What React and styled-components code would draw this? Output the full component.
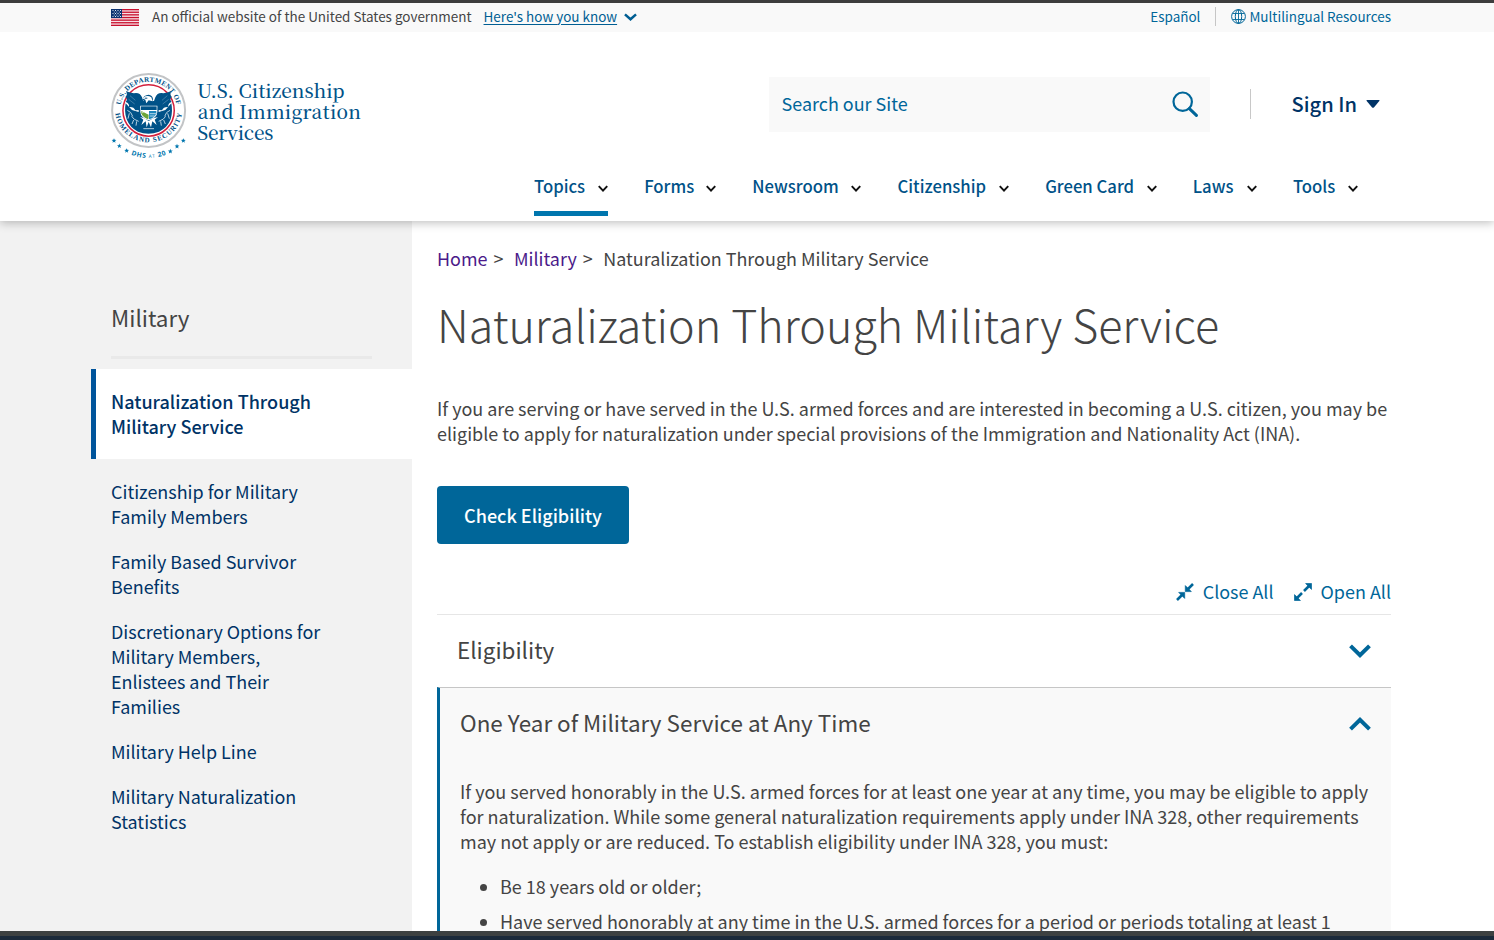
import React from "react";
import styled, { createGlobalStyle } from "styled-components";

const sans = '"Noto Sans CJK SC", "Noto Sans", sans-serif';

const GlobalStyle = createGlobalStyle`
  *, *::before, *::after { box-sizing: border-box; }
  body { margin: 0; background: #fff; }
  a { color: inherit; text-decoration: none; }
  svg { display: block; flex: none; }
`;

const Page = styled.div`
  display: flex;
  flex-direction: column;
  height: 940px;
  overflow: hidden;
  font: 400 17.96px/25px ${sans};
  color: #444;
  background: #fff;
`;

const TopEdge = styled.div`
  flex: none;
  height: 3px;
  background: #3d3d3d;
`;

const Banner = styled.div`
  flex: none;
  display: flex;
  align-items: center;
  height: 29px;
  padding: 0 103px 4px 111px;
  background: #f9f9f9;
  font-size: 13.48px;
  line-height: 20px;
  color: #444;
  white-space: nowrap;

  svg { margin-top: 2px; }
  > svg:first-child { margin-top: 4px; }
`;

const BannerText = styled.span`
  margin-left: 13px;
`;

const BannerLink = styled.a`
  display: flex;
  align-items: center;
  gap: ${(p) => p.$gap || 0}px;
  color: #069;
`;

const HowLink = styled(BannerLink)`
  margin-left: 12px;
  color: #005e93;
  gap: 7px;

  span {
    text-decoration: underline;
    text-underline-offset: 2px;
    text-decoration-thickness: 1px;
  }
`;

const Languages = styled.div`
  display: flex;
  align-items: center;
  margin-left: auto;
`;

const LanguageDivider = styled.div`
  width: 1px;
  height: 19px;
  margin: 2px 15px 0;
  background: #c6c6c6;
`;

const Header = styled.header`
  flex: none;
  position: relative;
  z-index: 1;
  display: flex;
  justify-content: space-between;
  height: 189px;
  padding: 0 103px 5px 111px;
  background: #fff;
  box-shadow: 0 2px 9px rgba(0, 0, 0, 0.25);
  clip-path: inset(0 0 -14px 0);
`;

const LogoLink = styled.a`
  padding-top: 40px;
`;

const HeaderTools = styled.div`
  display: flex;
  flex-direction: column;
  justify-content: space-between;
  width: 857px;
  padding-top: 45px;
`;

const Actions = styled.div`
  display: flex;
  align-items: center;
  justify-content: flex-end;
`;

const SearchBox = styled.div`
  display: flex;
  align-items: center;
  justify-content: space-between;
  width: 441px;
  height: 55px;
  padding: 0 12px 2px 13px;
  background: #f9f9f9;
  color: #069;
`;

const ActionDivider = styled.div`
  width: 1px;
  height: 30px;
  margin: 0 41px 1px 40px;
  background: #c8c8c8;
`;

const SignIn = styled.a`
  display: flex;
  align-items: center;
  gap: 9px;
  margin: 0 11px 2px 0;
  color: #036;
  font-size: 20.1px;
  font-weight: 500;

  svg { margin-top: 1px; }
`;

const Nav = styled.nav`
  display: flex;
  justify-content: space-between;
  width: 824px;
`;

const NavItem = styled.a`
  display: flex;
  align-items: center;
  justify-content: space-between;
  width: ${(p) => p.$width}px;
  padding-bottom: 12px;
  border-bottom: 5px solid ${(p) => (p.$active ? "#0076ae" : "transparent")};
  color: #005288;
  font-size: 16.7px;
  font-weight: 500;
  line-height: 26px;

  svg { margin-top: 4px; }
`;

const Body = styled.div`
  flex: 1;
  display: flex;
  min-height: 0;
  overflow: hidden;
`;

const Sidebar = styled.aside`
  flex: none;
  width: 412px;
  padding: 81px 0 0 91px;
  background: #f2f2f2;
  color: #036;
`;

const SidebarTitle = styled.h2`
  width: 261px;
  height: 57px;
  margin: 0 0 10px 20px;
  border-bottom: 3px solid #e9e9e9;
  color: #444;
  font-size: 22.45px;
  font-weight: 400;
  line-height: 30px;
`;

const ActiveTopic = styled.a`
  display: block;
  height: 90px;
  padding: 20px 80px 0 15px;
  border-left: 5px solid #00549b;
  background: #fff;
  font-size: 18.04px;
  font-weight: 500;
`;

const TopicList = styled.ul`
  display: flex;
  flex-direction: column;
  gap: 20px;
  width: 245px;
  margin: 0;
  padding: 20px 0 0 20px;
  list-style: none;
`;

const Content = styled.main`
  width: 979px;
  padding: 25px 0 0 25px;
`;

const Breadcrumb = styled.nav`
  display: flex;
  white-space: pre;

  a { color: #4b1a8a; }
`;

const Separator = styled.span`
  width: 26.5px;
  padding-left: 6px;
`;

const Title = styled.h1`
  margin: 23px 0 0;
  font-size: 44.85px;
  font-weight: 300;
  line-height: 60px;
`;

const Intro = styled.p`
  margin: 42px 0 40px;
  font-size: 17.98px;
`;

const Button = styled.a`
  display: flex;
  align-items: center;
  justify-content: center;
  width: 192px;
  height: 58px;
  border-radius: 4px;
  background: #069;
  color: #fff;
  font-size: 18.05px;
  font-weight: 500;
`;

const Toggles = styled.div`
  display: flex;
  justify-content: flex-end;
  gap: 20px;
  height: 71px;
  padding-top: 35px;
  border-bottom: 1px solid #e6e6e6;
  color: #069;
`;

const Toggle = styled.a`
  display: flex;
  align-items: center;
  height: 25px;
  gap: 9px;
`;

const PanelHead = styled.h3`
  display: flex;
  align-items: center;
  justify-content: space-between;
  height: 72px;
  margin: 0;
  padding: 0 20px 4px;
  font-size: 22.45px;
  font-weight: 400;
  line-height: 30px;

  svg { margin-top: 3px; }
`;

const OpenPanel = styled.section`
  height: 260px;
  border-top: 1px solid #c6c6c6;
  border-left: 3px solid #069;
  background: #f9f9f9;
  font-size: 18px;
`;

const PanelText = styled.p`
  margin: 19px 0 20px;
  padding: 0 20px;
`;

const Requirements = styled.ul`
  display: flex;
  flex-direction: column;
  gap: 10px;
  margin: 0;
  padding: 0 20px;
  list-style: none;
`;

const Requirement = styled.li`
  display: flex;
  align-items: center;
  gap: 13px;
  padding-left: 20px;
  white-space: nowrap;

  &::before {
    content: "";
    width: 7px;
    height: 7px;
    margin-top: 2px;
    border-radius: 50%;
    background: #444;
  }
`;

const BottomEdge = styled.div`
  flex: none;
  height: 9px;
  border-top: 5px solid #3d4141;
  background: #1b2a3a;
`;

const Chevron = ({ w, h, stroke, color, up }) => (
  <svg width={w} height={h} viewBox={`0 0 ${w} ${h}`} fill="none" stroke={color} strokeWidth={stroke}>
    <path
      d={
        up
          ? `M${stroke / 2.6} ${h - stroke / 2.6 - 0.4}L${w / 2} ${stroke / 1.4}L${w - stroke / 2.6} ${h - stroke / 2.6 - 0.4}`
          : `M${stroke / 2.6} ${stroke / 2.6 + 0.4}L${w / 2} ${h - stroke / 1.4}L${w - stroke / 2.6} ${stroke / 2.6 + 0.4}`
      }
    />
  </svg>
);

const Flag = () => (
  <svg width="28" height="17" viewBox="0 0 28 17">
    <rect width="28" height="17" fill="#f7dfe4" />
    {[0, 2.6, 5.2, 7.9, 10.5, 13.1, 15.7].map((y) => (
      <rect key={y} y={y} width="28" height="1.3" fill="#c8102e" />
    ))}
    <rect width="11" height="9" fill="#0b3270" />
    {[1.5, 4.5, 7.5].map((y) =>
      [1.5, 4, 6.5, 9].map((x) => <rect key={`${x}-${y}`} x={x} y={y - 0.5} width="1" height="1" fill="#dfe6f1" />)
    )}
    {[3, 6].map((y) =>
      [2.8, 5.3, 7.8].map((x) => <rect key={`${x}-${y}`} x={x} y={y - 0.4} width="0.9" height="0.9" fill="#dfe6f1" />)
    )}
  </svg>
);

const Globe = () => (
  <svg width="15" height="15" viewBox="0 0 15 15" fill="none" stroke="#069">
    <circle cx="7.5" cy="7.5" r="6.9" />
    <ellipse cx="7.5" cy="7.5" rx="3.2" ry="6.9" />
    <path d="M7.5 .6V14.4M1.7 4.500H13.3M1.7 10.500H13.3" strokeWidth=".9" />
  </svg>
);

const SearchIcon = () => (
  <svg width="26" height="26" viewBox="0 0 26 26" fill="none" stroke="#069">
    <circle cx="10.7" cy="10.7" r="9.2" strokeWidth="2.2" />
    <path d="M17.4 17.6L24.4 24.4" strokeWidth="3" strokeLinecap="round" />
  </svg>
);

const CollapseIcon = () => (
  <svg width="18" height="18" viewBox="0 0 18 18" fill="#069" stroke="#069">
    <path d="M9.3 2.6V8.6H15.3Z" strokeWidth=".7" strokeLinejoin="round" />
    <path d="M2.7 9.4H8.7V15.4Z" strokeWidth=".7" strokeLinejoin="round" />
    <path d="M12 6L17 1M6 12L1 17" strokeWidth="2.6" />
  </svg>
);

const ExpandIcon = () => (
  <svg width="18" height="18" viewBox="0 0 18 18" fill="#069" stroke="#069">
    <path d="M11.6.5H17.5V6.4Z" strokeWidth=".7" strokeLinejoin="round" />
    <path d="M.5 11.6V17.5H6.4Z" strokeWidth=".7" strokeLinejoin="round" />
    <path d="M15 3L10 8M3 15L8 10" strokeWidth="2.6" />
  </svg>
);

const star = "M0-7.5L2-2.400 7.200-2.200 3.100 1 4.500 6.200 0 3.200-4.500 6.200-3.100 1-7.200-2.200-2-2.400Z";

const Logo = () => (
  <svg width="252" height="90" viewBox="33 36 756 270">
    <defs>
      <path id="arcTop" d="M60.300 151A85.500 85.500 0 0 1 231.300 151" />
      <path id="arcBottom" d="M44.800 146A101 101 0 0 0 246.800 146" />
      <path id="arcYear" d="M2.800 151A143 143 0 0 0 288.800 151" />
    </defs>
    <circle cx="145.800" cy="151.500" r="109.500" fill="#fff" stroke="#c2c4c6" strokeWidth="6" />
    <circle cx="145.800" cy="151.500" r="77" fill="#fff" stroke="#d3203c" strokeWidth="4.500" />
    <g fill="#005288" fontFamily='"Liberation Serif", serif' fontSize="21" fontWeight="700" textAnchor="middle">
      <text textLength="236" lengthAdjust="spacing">
        <textPath href="#arcTop" startOffset="50%">U.S. DEPARTMENT OF</textPath>
      </text>
      <text textLength="288" lengthAdjust="spacing">
        <textPath href="#arcBottom" startOffset="50%">HOMELAND SECURITY</textPath>
      </text>
    </g>
    <g fill="#005288">
      <path d="M77 130Q72 155 80 178Q90 204 114 215Q145 227 177 215Q202 204 212 178Q219 155 214 130L196 150L176 156V142H116V156L96 150Z" />
      <path d="M78 93Q92 101 108 99Q121 99 126 112L130 123H162L166 112Q171 99 184 99Q200 101 214 93Q208 105 216 111Q207 116 215 126Q203 130 205 141Q190 140 186 151L172 150V140H120V150L106 151Q102 140 87 141Q89 130 77 126Q85 116 76 111Q84 105 78 93Z" />
      <path d="M128 117Q131 105 146 104Q157 105 159 117L157 130H135Z" />
    </g>
    <path d="M127 115L136 109Q146 106 154 112L158 124L146 121L139 130L136 119Z" fill="#fff" />
    <path d="M134 113H142V116H134Z" fill="#005288" />
    <path d="M121 137H172V156Q171 174 146 181Q122 174 121 156Z" fill="#fff" />
    <path d="M123 139H170V150H123Z" fill="#005288" />
    <path d="M124 153L146 164 145 178Q128 172 124 160Z" fill="#6ba539" />
    <path d="M147 153H169V161Q163 173 147 178Z" fill="#1f86bb" />
    <path d="M126 159L135 153 143 162M149 161H168M149 168H164" stroke="#fff" strokeWidth="2" fill="none" />
    <path d="M120 171L130 179 124 195 137 184 140 202 146 186 153 202 157 184 170 195 164 179 174 171 160 175 146 183 133 175Z" fill="#fff" />
    <path d="M82 151Q94 155 98 169M88 160L84 176M95 169Q100 179 116 184M101 180L96 192M110 184L108 197M210 151Q198 155 194 169M203 160L208 176M197 169Q192 179 176 184M191 180L196 192M182 184L184 197M130 206H162" stroke="#dbe8f1" strokeWidth="2.500" fill="none" />
    <path d="M90 107L106 121M86 118L104 132M202 107L186 121M206 118L188 132" stroke="#7ba6c4" strokeWidth="1.500" fill="none" />
    <g fill="#0076ae">
      {[[42, 242], [58, 258], [80, 272], [250, 242], [231, 259], [211, 274]].map(([x, y]) => (
        <path key={x} d={star} transform={`translate(${x} ${y})`} />
      ))}
      <text fontFamily='"Open Sans", sans-serif' fontSize="20" fontWeight="700" textAnchor="middle" textLength="108" lengthAdjust="spacing">
        <textPath href="#arcYear" startOffset="50%">
          DHS <tspan fontSize="14" fontWeight="400">AT</tspan> 20
        </textPath>
      </text>
    </g>
    <g fill="#005288" fontFamily='"Noto Serif CJK SC", "Liberation Serif", serif' fontSize="57" fontWeight="500">
      <text x="291" y="114" textLength="443">U.S. Citizenship</text>
      <text x="293" y="177" textLength="490">and Immigration</text>
      <text x="292" y="240" textLength="228">Services</text>
    </g>
  </svg>
);

const navItems = [
  ["Topics", 74],
  ["Forms", 72],
  ["Newsroom", 109],
  ["Citizenship", 111.5],
  ["Green Card", 111.5],
  ["Laws", 64],
  ["Tools", 65],
];

const topics = [
  "Citizenship for Military Family Members",
  "Family Based Survivor Benefits",
  "Discretionary Options for Military Members, Enlistees and Their Families",
  "Military Help Line",
  "Military Naturalization Statistics",
];

export default function App() {
  return (
    <>
      <GlobalStyle />
      <Page>
        <TopEdge />
        <Banner>
          <Flag />
          <BannerText>An official website of the United States government</BannerText>
          <HowLink>
            <span>Here's how you know</span>
            <Chevron w={13} h={8} stroke={2.5} color="#005e93" />
          </HowLink>
          <Languages>
            <BannerLink>Español</BannerLink>
            <LanguageDivider />
            <BannerLink $gap={3}>
              <Globe />
              Multilingual Resources
            </BannerLink>
          </Languages>
        </Banner>
        <Header>
          <LogoLink>
            <Logo />
          </LogoLink>
          <HeaderTools>
            <Actions>
              <SearchBox>
                Search our Site
                <SearchIcon />
              </SearchBox>
              <ActionDivider />
              <SignIn>
                Sign In
                <svg width="14" height="8" viewBox="0 0 14 8">
                  <path d="M1 0H13Q14 0 13.300 1L7.900 7.400Q7 8.300 6.100 7.400L.7 1Q0 0 1 0Z" fill="#036" />
                </svg>
              </SignIn>
            </Actions>
            <Nav>
              {navItems.map(([label, width], i) => (
                <NavItem key={label} $width={width} $active={i === 0}>
                  {label}
                  <Chevron w={10} h={7} stroke={2} color="#111" />
                </NavItem>
              ))}
            </Nav>
          </HeaderTools>
        </Header>
        <Body>
          <Sidebar>
            <SidebarTitle>Military</SidebarTitle>
            <ActiveTopic>Naturalization Through Military Service</ActiveTopic>
            <TopicList>
              {topics.map((topic) => (
                <li key={topic}>{topic}</li>
              ))}
            </TopicList>
          </Sidebar>
          <Content>
            <Breadcrumb>
              <a>Home</a>
              <Separator>&gt;</Separator>
              <a>Military</a>
              <Separator>&gt;</Separator>
              <span>Naturalization Through Military Service</span>
            </Breadcrumb>
            <Title>Naturalization Through Military Service</Title>
            <Intro>
              If you are serving or have served in the U.S. armed forces and are interested in becoming a U.S.
              citizen, you may be eligible to apply for naturalization under special provisions of the Immigration
              and Nationality Act (INA).
            </Intro>
            <Button>Check Eligibility</Button>
            <Toggles>
              <Toggle>
                <CollapseIcon />
                Close All
              </Toggle>
              <Toggle>
                <ExpandIcon />
                Open All
              </Toggle>
            </Toggles>
            <PanelHead>
              Eligibility
              <Chevron w={22} h={14} stroke={4} color="#069" />
            </PanelHead>
            <OpenPanel>
              <PanelHead>
                One Year of Military Service at Any Time
                <Chevron w={22} h={14} stroke={4} color="#069" up />
              </PanelHead>
              <PanelText>
                If you served honorably in the U.S. armed forces for at least one year at any time, you may be
                eligible to apply for naturalization. While some general naturalization requirements apply under INA
                328, other requirements may not apply or are reduced. To establish eligibility under INA 328, you
                must:
              </PanelText>
              <Requirements>
                <Requirement>Be 18 years old or older;</Requirement>
                <Requirement>
                  Have served honorably at any time in the U.S. armed forces for a period or periods totaling at least 1
                </Requirement>
              </Requirements>
            </OpenPanel>
          </Content>
        </Body>
        <BottomEdge />
      </Page>
    </>
  );
}
